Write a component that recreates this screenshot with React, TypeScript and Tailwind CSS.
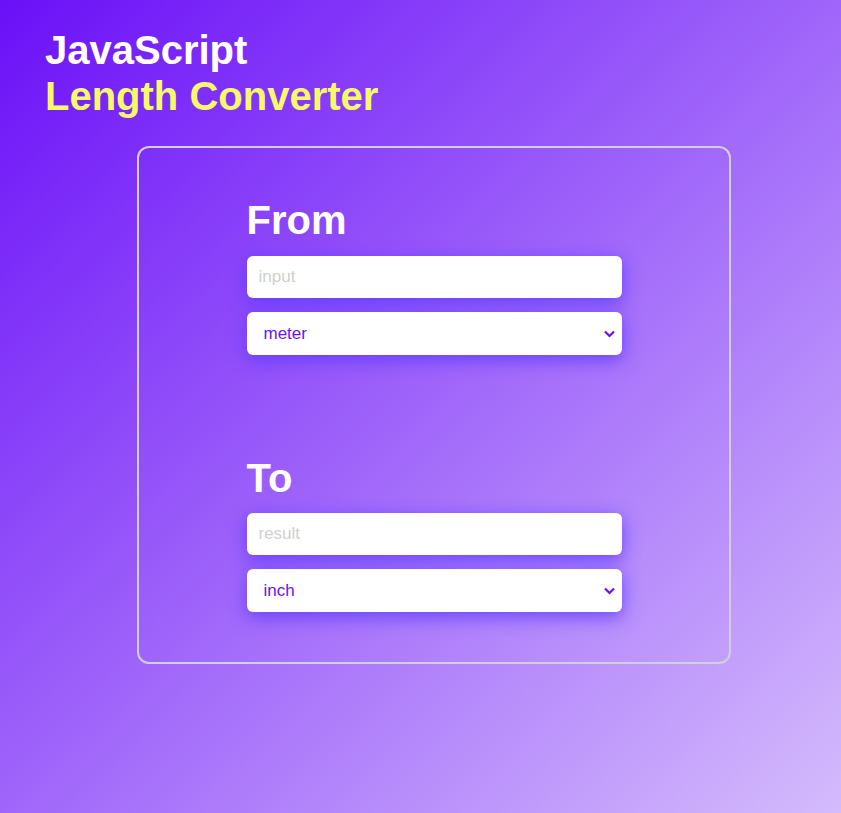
import { useState } from 'react'

const UNITS = ['meter', 'kilometer', 'centimeter', 'millimeter', 'inch', 'foot', 'yard', 'mile']

const FACTORS: Record<string, number> = {
  meter: 1,
  kilometer: 1000,
  centimeter: 0.01,
  millimeter: 0.001,
  inch: 0.0254,
  foot: 0.3048,
  yard: 0.9144,
  mile: 1609.344,
}

function UnitSelect({ value, onChange }: { value: string; onChange: (v: string) => void }) {
  return (
    <div className="relative h-[43px] w-full rounded-[6px] bg-white shadow-[0_5px_18px_rgba(92,60,255,0.85)]">
      <select
        value={value}
        onChange={(e) => onChange(e.target.value)}
        className="h-full w-full cursor-pointer appearance-none rounded-[6px] bg-transparent pl-[17px] pr-8 text-[17px] text-[#6a11f8] outline-none"
      >
        {UNITS.map((u) => (
          <option key={u} value={u}>
            {u}
          </option>
        ))}
      </select>
      <svg
        className="pointer-events-none absolute top-[18px] right-[7px]"
        width="11"
        height="8"
        viewBox="0 0 11 8"
        fill="none"
      >
        <path d="M1 1.5 L5.5 6 L10 1.5" stroke="#6a11f8" strokeWidth="2.2" />
      </svg>
    </div>
  )
}

export default function App() {
  const [input, setInput] = useState('')
  const [from, setFrom] = useState('meter')
  const [to, setTo] = useState('inch')

  const num = parseFloat(input)
  const result = isNaN(num) ? '' : String(+((num * FACTORS[from]) / FACTORS[to]).toFixed(6))

  return (
    <div className="min-h-[813px] w-full bg-[linear-gradient(to_bottom_right,#6b10f8,#d4bbfc)] pt-[27px] font-['Liberation_Sans',Arial,sans-serif]">
      <h1 className="pl-[45px] text-[40px] leading-[46px] font-bold">
        <span className="block text-white">JavaScript</span>
        <span className="block text-[#f7f86a]">Length Converter</span>
      </h1>

      <div className="mt-[27px] ml-[137px] flex h-[518px] w-[594px] flex-col items-center rounded-[12px] border-2 border-[#d2cfdc] pt-[49px]">
        <div className="flex w-[375px] flex-col">
          <h2 className="text-[40px] leading-[46px] font-bold text-white">From</h2>
          <input
            value={input}
            onChange={(e) => setInput(e.target.value)}
            placeholder="input"
            className="mt-[13px] h-[42px] w-full rounded-[6px] bg-white px-3 text-[17px] text-[#6a11f8] shadow-[0_5px_18px_rgba(92,60,255,0.85)] outline-none placeholder:text-[#d0d0d0]"
          />
          <div className="mt-[14px]">
            <UnitSelect value={from} onChange={setFrom} />
          </div>

          <h2 className="mt-[100px] text-[40px] leading-[46px] font-bold text-white">To</h2>
          <input
            value={result}
            readOnly
            placeholder="result"
            className="mt-[12px] h-[42px] w-full rounded-[6px] bg-white px-3 text-[17px] text-[#6a11f8] shadow-[0_5px_18px_rgba(92,60,255,0.85)] outline-none placeholder:text-[#d0d0d0]"
          />
          <div className="mt-[14px]">
            <UnitSelect value={to} onChange={setTo} />
          </div>
        </div>
      </div>
    </div>
  )
}
